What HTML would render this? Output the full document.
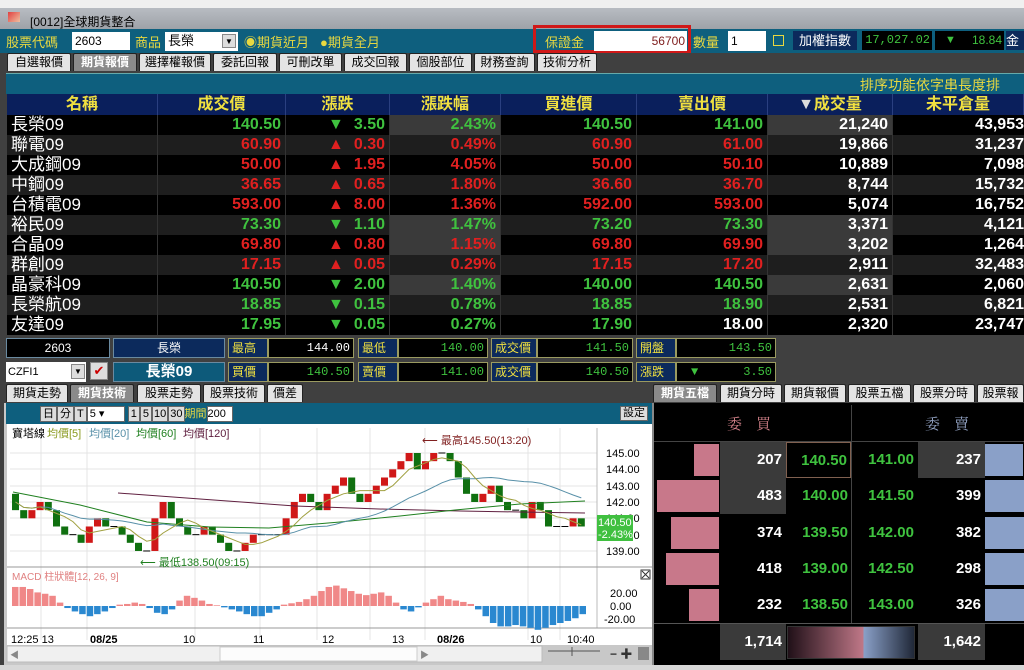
<!DOCTYPE html>
<html><head><meta charset="utf-8">
<style>
*{box-sizing:border-box;margin:0;padding:0}
body{width:1024px;height:670px;overflow:hidden;background:#404040;font-family:"Liberation Sans","Noto Sans CJK TC",sans-serif;position:relative}
.a{position:absolute}
.tab{position:absolute;top:0;height:18px;background:#e4e4e4;border:1px solid #222;border-bottom:none;font-size:12px;line-height:17px;text-align:center;color:#000;border-radius:2px 2px 0 0}
.tab.on{background:#8a8a8a;color:#fff;font-weight:bold}
.hd{position:absolute;top:0;height:21px;border-right:1px solid #2a3f80;color:#f0e040;font-weight:bold;font-size:16px;text-align:center;line-height:21px}
.r{position:absolute;left:7px;width:1017px;height:20px;font-size:16px;font-weight:bold;line-height:20px}
.r div{position:absolute;top:0;height:20px;text-align:right;border-right:1px solid #333}
.g{color:#3fc23f}.rd{color:#e02020}.w{color:#fff}
.nm{color:#fff;text-align:left!important;padding-left:4px;font-weight:normal;font-size:17px}
.box{position:absolute;height:20px;border:1px solid #9a9a60;font-size:12px;line-height:18px;padding:0 3px}
.lb{background:#0c2a5c;color:#f0e040}
.vl{background:#000;color:#3fc23f;text-align:right;font-family:"Liberation Mono",monospace}
.ob{position:absolute;font-size:15px;font-weight:bold;text-align:right;line-height:36px;height:36px}
</style></head><body>
<div class="a" style="left:0;top:0;width:1024px;height:8px;background:#f0f0f0"></div>
<div class="a" style="left:0;top:8px;width:1024px;height:21px;background:linear-gradient(#b8bcc2,#9ea2a8)"></div>
<div class="a" style="left:8px;top:12px;width:12px;height:10px;background:linear-gradient(135deg,#e04040,#f0c0a0)"></div>
<div class="a" style="left:30px;top:13px;font-size:12px;color:#000">[0012]全球期貨整合</div>
<div class="a" style="left:0;top:29px;width:1024px;height:24px;background:#0e5f7e"></div>
<div class="a" style="left:6px;top:32px;font-size:13px;color:#e8d840">股票代碼</div>
<div class="a" style="left:72px;top:32px;width:58px;height:18px;background:#fff;font-size:12px;line-height:18px;padding-left:3px">2603</div>
<div class="a" style="left:135px;top:32px;font-size:13px;color:#e8d840">商品</div>
<div class="a" style="left:165px;top:32px;width:73px;height:19px;background:#fff;font-size:13px;line-height:18px;padding-left:3px">長榮<span style="position:absolute;right:2px;top:2px;width:14px;height:14px;background:#ddd;border:1px solid #888;font-size:8px;text-align:center;line-height:13px">▼</span></div>
<div class="a" style="left:244px;top:32px;font-size:13px;color:#e8d840">◉期貨近月</div>
<div class="a" style="left:320px;top:32px;font-size:13px;color:#e8d840">●期貨全月</div>
<div class="a" style="left:533px;top:25px;width:158px;height:28px;border:3px solid #d01818"></div>
<div class="a" style="left:545px;top:32px;font-size:13px;color:#e8d840">保證金</div>
<div class="a" style="left:594px;top:31px;width:93px;height:20px;background:#fff;font-size:12px;line-height:20px;text-align:right;padding-right:2px;color:#802020">56700</div>
<div class="a" style="left:693px;top:32px;font-size:13px;color:#e8d840">數量</div>
<div class="a" style="left:728px;top:31px;width:38px;height:20px;background:#fff;font-size:12px;line-height:20px;padding-left:3px">1</div>
<div class="a" style="left:773px;top:32px;width:11px;height:11px;border:1px solid #e8d840;margin-top:3px"></div>
<div class="a" style="left:793px;top:31px;width:64px;height:19px;background:#0c2a5c;color:#fff;font-size:13px;line-height:19px;text-align:center">加權指數</div>
<div class="a" style="left:862px;top:31px;width:70px;height:19px;background:#000;color:#3fc23f;font-size:12px;line-height:19px;text-align:right;padding-right:2px;font-family:'Liberation Mono',monospace">17,027.02</div>
<div class="a" style="left:935px;top:31px;width:69px;height:19px;background:#000;color:#3fc23f;font-size:12px;line-height:19px;text-align:right;padding-right:2px"><span style="position:absolute;left:10px;font-size:11px">▼</span>18.84</div>
<div class="a" style="left:1006px;top:31px;width:18px;height:19px;background:#0c2a5c;color:#fff;font-size:13px;line-height:19px">金</div>
<div class="a" style="left:0;top:53px;width:1024px;height:20px;background:#404040">
<div class="tab" style="left:7px;width:64px">自選報價</div>
<div class="tab on" style="left:73px;width:64px">期貨報價</div>
<div class="tab" style="left:139px;width:72px">選擇權報價</div>
<div class="tab" style="left:213px;width:64px">委託回報</div>
<div class="tab" style="left:279px;width:63px">可刪改單</div>
<div class="tab" style="left:344px;width:63px">成交回報</div>
<div class="tab" style="left:409px;width:63px">個股部位</div>
<div class="tab" style="left:474px;width:61px">財務查詢</div>
<div class="tab" style="left:537px;width:60px">技術分析</div>
</div>
<div class="a" style="left:6px;top:73px;width:1018px;height:21px;background:#0e5f7e;border-top:1px solid #6aa"></div>
<div class="a" style="left:860px;top:75px;font-size:14px;color:#e8d840;white-space:nowrap">排序功能依字串長度排</div>
<div class="a" style="left:7px;top:94px;width:1017px;height:21px;background:#0a1f5c">
<div class="hd" style="left:0;width:151px">名稱</div>
<div class="hd" style="left:151px;width:128px">成交價</div>
<div class="hd" style="left:279px;width:104px">漲跌</div>
<div class="hd" style="left:383px;width:111px">漲跌幅</div>
<div class="hd" style="left:494px;width:136px">買進價</div>
<div class="hd" style="left:630px;width:131px">賣出價</div>
<div class="hd" style="left:761px;width:125px"><span style="color:#ddd">▼</span>成交量</div>
<div class="hd" style="left:886px;width:131px">未平倉量</div>
</div>
<div id="rows"></div>
<div class="a" style="left:0;top:335px;width:1024px;height:50px;background:#404040"></div>
<div class="box" style="left:6px;top:338px;width:104px;background:#000;color:#fff;text-align:center;border-color:#6a8aa0">2603</div>
<div class="box" style="left:113px;top:338px;width:112px;background:#0c2a5c;color:#fff;text-align:center;border-color:#6a8aa0">長榮</div>
<div class="box lb" style="left:228px;top:338px;width:40px">最高</div>
<div class="box vl" style="left:268px;top:338px;width:86px;color:#fff">144.00</div>
<div class="box lb" style="left:358px;top:338px;width:40px">最低</div>
<div class="box vl" style="left:398px;top:338px;width:90px">140.00</div>
<div class="box lb" style="left:491px;top:338px;width:46px">成交價</div>
<div class="box vl" style="left:537px;top:338px;width:96px">141.50</div>
<div class="box lb" style="left:636px;top:338px;width:40px">開盤</div>
<div class="box vl" style="left:676px;top:338px;width:100px">143.50</div>
<div class="a" style="left:6px;top:362px;width:80px;height:20px;background:#fff;font-size:11px;line-height:20px;padding-left:2px">CZFI1<span style="position:absolute;right:1px;top:2px;width:14px;height:15px;background:#ddd;border:1px solid #888;font-size:8px;text-align:center;line-height:14px">▼</span></div>
<div class="a" style="left:90px;top:362px;width:18px;height:18px;background:#ddd;border:1px solid #888;color:#c00;font-size:13px;line-height:16px;text-align:center">✔</div>
<div class="box" style="left:113px;top:362px;width:112px;background:#0d5a7a;color:#fff;text-align:center;font-size:15px;font-weight:bold;border-color:#6a8aa0">長榮09</div>
<div class="box lb" style="left:228px;top:362px;width:40px">買價</div>
<div class="box vl" style="left:268px;top:362px;width:86px">140.50</div>
<div class="box lb" style="left:358px;top:362px;width:40px">賣價</div>
<div class="box vl" style="left:398px;top:362px;width:90px">141.00</div>
<div class="box lb" style="left:491px;top:362px;width:46px">成交價</div>
<div class="box vl" style="left:537px;top:362px;width:96px">140.50</div>
<div class="box lb" style="left:636px;top:362px;width:40px">漲跌</div>
<div class="box vl" style="left:676px;top:362px;width:100px"><span style="position:absolute;left:14px;font-size:12px">▼</span>3.50</div>
<div class="a" style="left:0;top:384px;width:1024px;height:19px">
<div class="tab" style="left:6px;width:62px">期貨走勢</div>
<div class="tab on" style="left:70px;width:64px">期貨技術</div>
<div class="tab" style="left:137px;width:64px">股票走勢</div>
<div class="tab" style="left:203px;width:62px">股票技術</div>
<div class="tab" style="left:267px;width:36px">價差</div>
<div class="tab on" style="left:653px;width:64px">期貨五檔</div>
<div class="tab" style="left:720px;width:62px">期貨分時</div>
<div class="tab" style="left:784px;width:62px">期貨報價</div>
<div class="tab" style="left:848px;width:63px">股票五檔</div>
<div class="tab" style="left:913px;width:62px">股票分時</div>
<div class="tab" style="left:977px;width:47px">股票報價</div>
</div>
<div class="a" style="left:4px;top:403px;width:648px;height:263px;background:#c8c8c8"></div>
<div class="a" style="left:6px;top:403px;width:646px;height:21px;background:#0e5f7e"></div>
<div class="a" style="left:40px;top:406px;font-size:11px;line-height:14px;white-space:nowrap">
<span style="display:inline-block;background:#ddd;border:1px solid #666;padding:0 2px">日</span><span style="display:inline-block;background:#ddd;border:1px solid #666;padding:0 2px">分</span><span style="display:inline-block;background:#ddd;border:1px solid #666;padding:0 2px">T</span><span style="display:inline-block;background:#fff;border:1px solid #666;width:38px;padding-left:2px">5 ▾</span>
<span style="display:inline-block;background:#ddd;border:1px solid #666;padding:0 2px">1</span><span style="display:inline-block;background:#ddd;border:1px solid #666;padding:0 2px">5</span><span style="display:inline-block;background:#ddd;border:1px solid #666;padding:0 1px">10</span><span style="display:inline-block;background:#ddd;border:1px solid #666;padding:0 1px">30</span><span style="color:#e8d840">期間</span><span style="display:inline-block;background:#fff;border:1px solid #666;width:26px">200</span></div>
<div class="a" style="left:620px;top:406px;width:28px;height:15px;background:#ddd;border:1px solid #666;font-size:11px;line-height:13px;text-align:center">設定</div>
<div class="a" style="left:7px;top:424px;width:645px;height:221px;background:#fff"></div>
<svg class="a" style="left:0;top:0" width="660" height="670" id="ch">
<g stroke="#e4e4e4" stroke-width="1">
<line x1="41" y1="428" x2="41" y2="640"/><line x1="87" y1="428" x2="87" y2="640"/><line x1="195" y1="428" x2="195" y2="640"/><line x1="260" y1="428" x2="260" y2="640"/><line x1="317" y1="428" x2="317" y2="640"/><line x1="370" y1="428" x2="370" y2="640"/><line x1="425" y1="428" x2="425" y2="640"/><line x1="528" y1="428" x2="528" y2="640"/><line x1="560" y1="428" x2="560" y2="640"/>
<line x1="10" y1="453" x2="597" y2="453"/><line x1="10" y1="469" x2="597" y2="469"/><line x1="10" y1="486" x2="597" y2="486"/><line x1="10" y1="502" x2="597" y2="502"/><line x1="10" y1="518" x2="597" y2="518"/><line x1="10" y1="535" x2="597" y2="535"/><line x1="10" y1="551" x2="597" y2="551"/>
</g>
<line x1="597" y1="428" x2="597" y2="628" stroke="#bbb"/>
<line x1="7" y1="567" x2="652" y2="567" stroke="#999"/>
<line x1="7" y1="628" x2="652" y2="628" stroke="#999"/>
<g id="cdl"></g>
<polyline fill="none" stroke="#602040" stroke-width="1" points="118,493 200,499 295,506 379,509 460,511 520,512 585,513"/>
<polyline fill="none" stroke="#208020" stroke-width="1" points="13,492 80,505 147,522 210,527 269,528 340,522 400,516 455,510 520,504 585,501"/>
<polyline id="ma20" fill="none" stroke="#5890a8" stroke-width="1"/>
<polyline id="ma5" fill="none" stroke="#a0a040" stroke-width="1"/>
<g id="macd"></g>
<text x="12" y="437" font-size="11" fill="#000">寶塔線</text>
<text x="47" y="437" font-size="11" fill="#8a9a20">均價[5]</text>
<text x="89" y="437" font-size="11" fill="#5890a8">均價[20]</text>
<text x="136" y="437" font-size="11" fill="#208020">均價[60]</text>
<text x="183" y="437" font-size="11" fill="#602040">均價[120]</text>
<text x="422" y="444" font-size="11" fill="#802020">⟵ 最高145.50(13:20)</text>
<text x="140" y="566" font-size="11" fill="#208020">⟵ 最低138.50(09:15)</text>
<text x="12" y="580" font-size="10" fill="#e08080">MACD 柱狀體[12, 26, 9]</text>
<g font-size="11" fill="#000" font-family="Liberation Sans">
<text x="606" y="457">145.00</text><text x="606" y="473">144.00</text><text x="606" y="490">143.00</text><text x="606" y="506">142.00</text><text x="606" y="522">141.00</text><text x="606" y="539">140.00</text><text x="606" y="555">139.00</text>
<text x="610" y="597">20.00</text><text x="610" y="610">0.00</text><text x="604" y="623">-20.00</text>
<text x="11" y="643">12:25 13</text><text x="90" y="643" font-weight="bold">08/25</text><text x="183" y="643">10</text><text x="253" y="643">11</text><text x="322" y="643">12</text><text x="392" y="643">13</text><text x="437" y="643" font-weight="bold">08/26</text><text x="530" y="643">10</text><text x="567" y="643">10:40</text>
</g>
<rect x="597" y="515" width="36" height="26" fill="#40c040"/>
<text x="598" y="526" font-size="11" fill="#fff">140.50</text><text x="598" y="538" font-size="11" fill="#fff">-2.43%</text>
<rect x="641" y="570" width="9" height="9" fill="#fff" stroke="#333"/><path d="M642 571 L649 578 M649 571 L642 578" stroke="#333"/>
<rect x="7" y="646" width="535" height="16" fill="#f0f0f0" stroke="#bbb"/>
<rect x="220" y="647" width="197" height="14" fill="#fcfcfc" stroke="#ccc"/>
<text x="10" y="658" font-size="9" fill="#888">◀</text><text x="420" y="658" font-size="9" fill="#888">▶</text>
<line x1="548" y1="651" x2="600" y2="651" stroke="#555"/><line x1="572" y1="647" x2="572" y2="656" stroke="#555"/>
<text x="610" y="658" font-size="12" font-weight="bold" fill="#333">− ✚</text>
<rect x="638" y="647" width="11" height="13" fill="#888"/>
</svg>
<div class="a" style="left:652px;top:403px;width:372px;height:262px;background:#000;border-left:2px solid #888"></div>
<div class="a" style="left:654px;top:405px;width:370px;height:37px;border-bottom:1px solid #444"></div>
<div class="a" style="left:851px;top:405px;width:1px;height:218px;background:#444"></div>
<div class="a" style="left:727px;top:413px;font-size:15px;color:#d08088;font-family:'Noto Serif CJK SC',serif;letter-spacing:14px">委買</div>
<div class="a" style="left:925px;top:413px;font-size:15px;color:#90a0c0;font-family:'Noto Serif CJK SC',serif;letter-spacing:14px">委賣</div>
<div id="ob"></div>
<div class="a" style="left:654px;top:623px;width:370px;height:1px;background:#555"></div>
<div class="ob" style="left:720px;top:624px;width:66px;height:36px;background:#3a3a3a;color:#fff;padding-right:4px">1,714</div>
<div class="a" style="left:787px;top:626px;width:128px;height:33px;border:1px solid #333;background:linear-gradient(90deg,#201018,#c07888 60%,#8aa0c8 60%,#202838)"></div>
<div class="ob" style="left:918px;top:624px;width:67px;height:36px;background:#3a3a3a;color:#fff;padding-right:4px">1,642</div>
<div class="a" style="left:0;top:665px;width:1024px;height:5px;background:#d8d8d8"></div>
<script>
var rows=[["長榮09","140.50","▼","3.50","2.43%","140.50","141.00","21,240","43,953","g"],
["聯電09","60.90","▲","0.30","0.49%","60.90","61.00","19,866","31,237","rd"],
["大成鋼09","50.00","▲","1.95","4.05%","50.00","50.10","10,889","7,098","rd"],
["中鋼09","36.65","▲","0.65","1.80%","36.60","36.70","8,744","15,732","rd"],
["台積電09","593.00","▲","8.00","1.36%","592.00","593.00","5,074","16,752","rd"],
["裕民09","73.30","▼","1.10","1.47%","73.20","73.30","3,371","4,121","g"],
["合晶09","69.80","▲","0.80","1.15%","69.80","69.90","3,202","1,264","rd"],
["群創09","17.15","▲","0.05","0.29%","17.15","17.20","2,911","32,483","rd"],
["晶豪科09","140.50","▼","2.00","1.40%","140.00","140.50","2,631","2,060","g"],
["長榮航09","18.85","▼","0.15","0.78%","18.85","18.90","2,531","6,821","g"],
["友達09","17.95","▼","0.05","0.27%","17.90","18.00","2,320","23,747","g"]];
var hl={0:1,5:1,6:1,8:1};
var h="";
rows.forEach(function(r,i){var bg=i%2?"#1e1e1e":"#000";var c=r[9];var hb=hl[i]?"#3a3a3a":bg;
var last=(i==10)?"w":c;
h+='<div class="r" style="top:'+(115+i*20)+'px;background:'+bg+'">'+
'<div class="nm" style="left:0;width:151px">'+r[0]+'</div>'+
'<div class="'+c+'" style="left:151px;width:128px;padding-right:4px">'+r[1]+'</div>'+
'<div class="'+c+'" style="left:279px;width:104px;padding-right:4px"><span style="position:absolute;left:42px;color:'+(c=="g"?"#3fc23f":"#e02020")+'">'+r[2]+'</span>'+r[3]+'</div>'+
'<div class="'+c+'" style="left:383px;width:111px;padding-right:4px;background:'+hb+'">'+r[4]+'</div>'+
'<div class="'+c+'" style="left:494px;width:136px;padding-right:4px">'+r[5]+'</div>'+
'<div class="'+last+'" style="left:630px;width:131px;padding-right:4px">'+r[6]+'</div>'+
'<div class="w" style="left:761px;width:125px;padding-right:4px;background:'+hb+'">'+r[7]+'</div>'+
'<div class="w" style="left:886px;width:131px;border:none">'+r[8]+'</div></div>';});
document.getElementById("rows").innerHTML=h;
var cl=[142.5,141.5,141.0,141.5,142.0,141.5,140.5,140.0,140.0,139.5,140.5,141.0,140.5,140.5,140.0,139.5,139.0,139.0,141.0,142.0,141.0,140.5,140.0,140.0,140.5,140.0,139.5,139.0,139.0,139.5,140.0,140.0,140.0,140.0,141.0,142.0,142.5,142.0,141.5,142.5,143.0,143.5,142.5,142.0,142.5,143.0,143.5,144.0,144.5,145.0,144.0,144.5,145.0,145.0,144.5,143.5,142.5,142.0,142.5,143.0,142.0,141.5,141.5,141.0,142.0,141.5,140.5,140.5,140.5,141.0,140.5];
function Y(p){return 453+(145-p)*16.33;}
var s="",n=cl.length,dx=8.2,p5=[],p20=[];
for(var i=1;i<n;i++){var c=cl[i],p=cl[i-1],x=12+(i-1)*dx;
if(c==p){s+='<line x1="'+x+'" x2="'+(x+7)+'" y1="'+Y(c)+'" y2="'+Y(c)+'" stroke="#000"/>';}
else{var t=Y(Math.max(c,p)),b=Y(Math.min(c,p));
s+='<rect x="'+x.toFixed(1)+'" y="'+t+'" width="7" height="'+(b-t)+'" fill="'+(c>p?"#d01818":"#107010")+'"/>';}
function ma(k){var a=0,m=0;for(var j=Math.max(0,i-k+1);j<=i;j++){a+=cl[j];m++;}return a/m;}
p5.push((x+3.5).toFixed(1)+","+Y(ma(5)).toFixed(1));
p20.push((x+3.5).toFixed(1)+","+Y(ma(20)).toFixed(1));}
document.getElementById("cdl").innerHTML=s;
document.getElementById("ma5").setAttribute("points",p5.join(" "));
document.getElementById("ma20").setAttribute("points",p20.join(" "));
var m=[28,28,25,20,18,15,5,-3,-8,-12,-15,-12,-8,-3,2,3,5,3,-3,-10,-12,-5,8,15,12,8,3,1,-2,-5,-8,-12,-15,-15,-10,-5,2,4,6,10,15,22,28,30,26,22,18,16,18,20,15,5,-5,-8,-2,5,10,15,10,8,6,3,-5,-15,-25,-30,-30,-28,-30,-32,-35,-32,-28,-25,-22,-18,-12];
var ms="",mw=575/m.length;
m.forEach(function(v,i){var x=12+i*mw,hh=Math.abs(v)*0.68;ms+='<rect x="'+x.toFixed(1)+'" y="'+(v>0?606-hh:606)+'" width="'+(mw-1).toFixed(1)+'" height="'+hh+'" fill="'+(v>0?"#f08888":"#2a88d0")+'"/>';});
document.getElementById("macd").innerHTML=ms;
var ob=[[207,"140.50","141.00",237,25,38],[483,"140.00","141.50",399,62,39],[374,"139.50","142.00",382,48,39],[418,"139.00","142.50",298,53,39],[232,"138.50","143.00",326,30,39]];
var o2="";
ob.forEach(function(r,i){var y=442+i*36.3;
o2+='<div class="a" style="left:'+(719-r[4])+'px;top:'+(y+2)+'px;width:'+r[4]+'px;height:32px;background:#c8788a"></div>';
o2+='<div class="ob" style="left:720px;top:'+y+'px;width:66px;background:'+(i<2?"#3a3a3a":"#000")+';color:#fff;padding-right:4px">'+r[0]+'</div>';
o2+='<div class="ob" style="left:786px;top:'+y+'px;width:65px;color:#3fc23f;padding-right:3px;'+(i==0?"border:1px solid #806050;":"")+'">'+r[1]+'</div>';
o2+='<div class="ob" style="left:852px;top:'+y+'px;width:65px;color:#3fc23f;padding-right:3px">'+r[2]+'</div>';
o2+='<div class="ob" style="left:918px;top:'+y+'px;width:67px;background:'+(i==0?"#3a3a3a":"#000")+';color:#fff;padding-right:4px">'+r[3]+'</div>';
o2+='<div class="a" style="left:985px;top:'+(y+2)+'px;width:'+r[5]+'px;height:32px;background:#8aa0c8"></div>';});
document.getElementById("ob").innerHTML=o2;
</script>
</body></html>
